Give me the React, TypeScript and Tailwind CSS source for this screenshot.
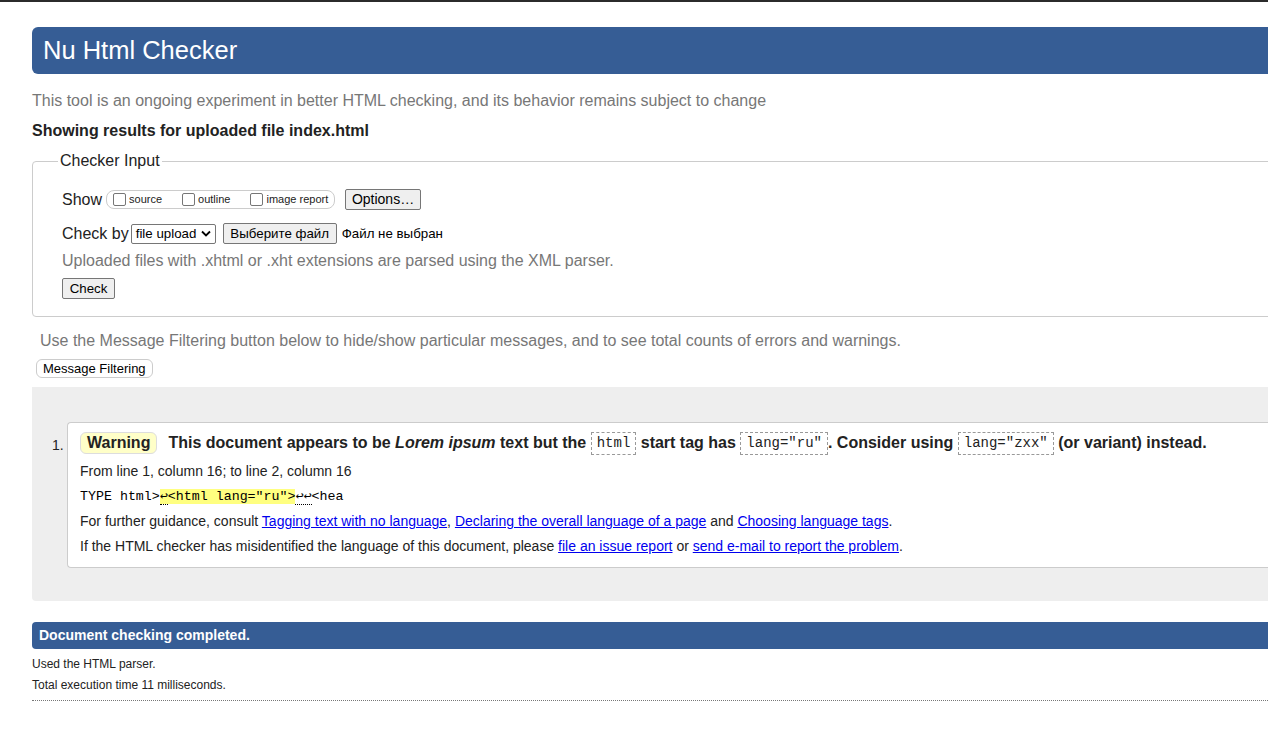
import React from 'react';

const sans = { fontFamily: '"Liberation Sans", Arial, sans-serif' };

function Code({ children }: { children: React.ReactNode }) {
  return (
    <code className="inline-block border border-dashed border-[#999] px-[5px] leading-[21px] align-middle font-normal text-[14px] text-[#222] [font-family:'Liberation_Mono',monospace]">
      {children}
    </code>
  );
}

function Checkbox({ label }: { label: string }) {
  return (
    <label className="flex items-center">
      <span className="w-[13px] h-[13px] border border-[#767676] rounded-[2px] bg-white mr-[3px]" />
      <span className="text-[11px] text-[#222]">{label}</span>
    </label>
  );
}

function NativeButton({ children, className = '' }: { children: React.ReactNode; className?: string }) {
  return (
    <button className={`h-[21px] bg-[#efefef] border border-[#767676] rounded-[2px] text-[13.3px] text-black flex items-center justify-center ${className}`}>
      {children}
    </button>
  );
}

export default function App() {
  return (
    <div className="w-full min-h-screen bg-white overflow-hidden text-[#222]" style={sans}>
      <div className="h-[2px] bg-[#2b2b2b]" />
      <div className="w-[1320px] pl-[32px]">
        {/* Header */}
        <div className="mt-[25px] h-[47px] bg-[#365d95] rounded-l-[6px] flex items-center pl-[11px]">
          <h1 className="text-[25.5px] text-white font-normal">Nu Html Checker</h1>
        </div>

        <p className="mt-[17px] text-[16px] leading-[20px] text-[#777]">
          This tool is an ongoing experiment in better HTML checking, and its behavior remains subject to change
        </p>
        <p className="mt-[10px] text-[16px] leading-[20px] font-bold">Showing results for uploaded file index.html</p>

        {/* Checker input */}
        <fieldset className="mt-[10px] border border-[#ccc] rounded-l-[4px] pl-[29px] pb-[17px]">
          <legend className="ml-[-4px] px-[2px] text-[16px] leading-[20px]">Checker Input</legend>
          <div className="mt-[18px] flex items-center h-[21px]">
            <span className="text-[16px] mr-[4px]">Show</span>
            <div className="flex items-center h-[19px] w-[229px] border border-[#ccc] rounded-[8px] pl-[6px] gap-[20px]">
              <Checkbox label="source" />
              <Checkbox label="outline" />
              <Checkbox label="image report" />
            </div>
            <NativeButton className="ml-[10px] w-[76px] text-[14px]">Options…</NativeButton>
          </div>
          <div className="mt-[13px] flex items-center h-[21px]">
            <span className="text-[16px] mr-[2px]">Check by</span>
            <div className="h-[20px] w-[85px] border border-[#767676] rounded-[2px] flex items-center justify-between px-[4px] text-[13.3px] text-black">
              <span>file upload</span>
              <svg width="10" height="7" viewBox="0 0 10 7">
                <path d="M1 1.5 L5 5.5 L9 1.5" stroke="#000" strokeWidth="1.8" fill="none" />
              </svg>
            </div>
            <NativeButton className="ml-[7px] w-[114px]">Выберите файл</NativeButton>
            <span className="ml-[5px] text-[13.3px] text-black">Файл не выбран</span>
          </div>
          <p className="mt-[7px] text-[16px] leading-[20px] text-[#777]">
            Uploaded files with .xhtml or .xht extensions are parsed using the XML parser.
          </p>
          <NativeButton className="mt-[7px] w-[53px]">Check</NativeButton>
        </fieldset>

        <p className="mt-[14px] ml-[8px] text-[16px] leading-[20px] text-[#777]">
          Use the Message Filtering button below to hide/show particular messages, and to see total counts of errors and warnings.
        </p>
        <button className="mt-[8px] ml-[4px] h-[19px] px-[6px] border border-[#ccc] rounded-[6px] bg-white text-[13px] text-black flex items-center">
          Message Filtering
        </button>

        {/* Results */}
        <div className="mt-[9px] bg-[#eee] rounded-bl-[4px] pt-[35px] pb-[33px] pl-[35px]">
          <div className="relative bg-white border-l border-t border-b border-[#ccc] rounded-l-[4px] pl-[12px] pt-[8px] pb-[8px]">
            <span className="absolute left-[-16px] top-[12px] text-[14px]">1.</span>
            <div className="flex items-center flex-wrap text-[16px] font-bold leading-[24px]">
              <span className="inline-flex items-center h-[22px] px-[6px] bg-[#ffffc8] border border-[#ddd] rounded-[6px] mr-[11px]">Warning</span>
              <span>This document appears to be&nbsp;</span>
              <i>Lorem ipsum</i>
              <span>&nbsp;text but the&nbsp;</span>
              <Code>html</Code>
              <span>&nbsp;start tag has&nbsp;</span>
              <Code>lang="ru"</Code>
              <span>. Consider using&nbsp;</span>
              <Code>lang="zxx"</Code>
              <span>&nbsp;(or variant) instead.</span>
            </div>
            <div className="mt-[4px] text-[14px] leading-[25px]">
              <p>From line 1, column 16; to line 2, column 16</p>
              <p className="text-[13.3px] [font-family:'Liberation_Mono',monospace] text-black">
                TYPE html&gt;
                <span className="bg-[#ffff80]">
                  <span className="border-b border-dotted border-black">↩</span>&lt;html lang="ru"&gt;
                </span>
                <span className="border-b border-dotted border-black">↩↩</span>&lt;hea
              </p>
              <p>
                For further guidance, consult{' '}
                <a className="text-[#0000ee] underline" href="#">Tagging text with no language</a>,{' '}
                <a className="text-[#0000ee] underline" href="#">Declaring the overall language of a page</a> and{' '}
                <a className="text-[#0000ee] underline" href="#">Choosing language tags</a>.
              </p>
              <p>
                If the HTML checker has misidentified the language of this document, please{' '}
                <a className="text-[#0000ee] underline" href="#">file an issue report</a> or{' '}
                <a className="text-[#0000ee] underline" href="#">send e-mail to report the problem</a>.
              </p>
            </div>
          </div>
        </div>

        {/* Summary */}
        <div className="mt-[21px] h-[27px] bg-[#365d95] rounded-l-[4px] flex items-center pl-[7px]">
          <span className="text-[14px] font-bold text-white">Document checking completed.</span>
        </div>
        <p className="mt-[5px] text-[12px] leading-[21px]">Used the HTML parser.</p>
        <p className="text-[12px] leading-[21px]">Total execution time 11 milliseconds.</p>
        <div className="mt-[4px] border-b border-dotted border-[#777]" />
      </div>
    </div>
  );
}
